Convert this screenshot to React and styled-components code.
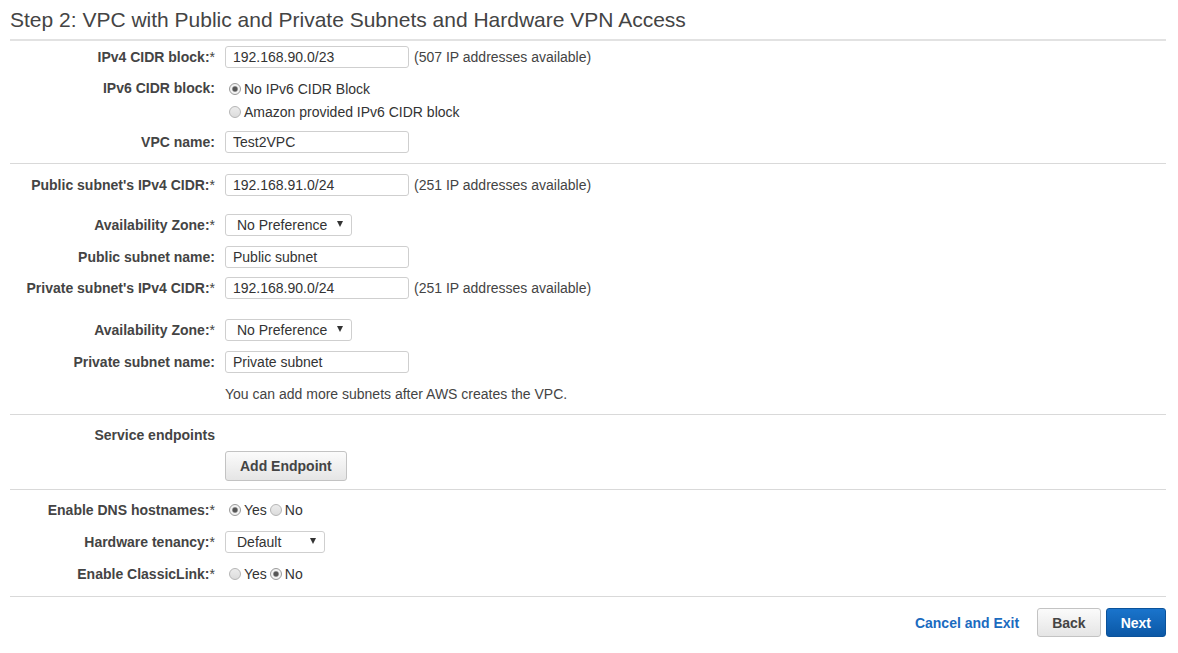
import styled, { createGlobalStyle } from "styled-components";

const GlobalStyle = createGlobalStyle`
  body {
    margin: 0;
    background: #fff;
    font-family: "Liberation Sans", Arial, sans-serif;
  }
`;

const Page = styled.div`
  padding: 0 12px 0 10px;
  font-family: "Liberation Sans", Arial, sans-serif;
  font-size: 14px;
  color: #444;
`;

const Title = styled.h2`
  margin: 0;
  height: 39px;
  line-height: 39px;
  font-size: 21px;
  font-weight: normal;
  color: #444;
  border-bottom: 2px solid #e2e2e2;
`;

const Section = styled.section`
  padding: ${(p) => p.$pt}px 0 ${(p) => p.$pb}px;
  border-bottom: 1px solid #d9d9d9;
`;

const Row = styled.div`
  display: flex;
  align-items: flex-start;
  margin-top: ${(p) => p.$mt || 0}px;
`;

const Label = styled.div`
  width: 205px;
  margin-right: 10px;
  flex-shrink: 0;
  text-align: right;
  line-height: 22px;
  font-weight: bold;
  color: #444;
  white-space: nowrap;
`;

const Req = styled.span`
  font-weight: normal;
`;

const Field = styled.div`
  display: flex;
  flex-direction: ${(p) => (p.$column ? "column" : "row")};
  align-items: ${(p) => (p.$column ? "flex-start" : "center")};
  min-height: 22px;
`;

const TextInput = styled.input`
  box-sizing: border-box;
  width: 184px;
  height: 22px;
  margin: 0;
  padding: 0 7px;
  border: 1px solid #cfcfcf;
  border-radius: 3px;
  font-family: "Liberation Sans", Arial, sans-serif;
  font-size: 14px;
  color: #333;
  background: #fff;
  outline: none;
`;

const Hint = styled.span`
  margin-left: 5px;
  line-height: 22px;
  color: #444;
`;

const Note = styled.div`
  line-height: 22px;
  color: #444;
`;

const Select = styled.div`
  box-sizing: border-box;
  width: ${(p) => p.$w}px;
  height: 22px;
  display: flex;
  align-items: center;
  justify-content: space-between;
  padding: 0 8px 0 11px;
  border: 1px solid #cfcfcf;
  border-radius: 3px;
  background: #fff;
  color: #333;
  cursor: default;
`;

const Caret = styled.span`
  width: 0;
  height: 0;
  margin-top: -2px;
  border-left: 3.5px solid transparent;
  border-right: 3.5px solid transparent;
  border-top: 6px solid #333;
`;

const RadioLine = styled.label`
  display: flex;
  align-items: center;
  height: 23px;
  color: #333;
`;

const RadioInline = styled.label`
  display: flex;
  align-items: center;
  height: 22px;
  color: #333;

  & + & {
    margin-left: -1px;
  }
`;

const RadioDot = styled.span`
  box-sizing: border-box;
  width: 12px;
  height: 12px;
  margin: 0 3px 0 4px;
  border-radius: 50%;
  border: 1px solid ${(p) => (p.$on ? "#9a9a9a" : "#b5b5b5")};
  background: ${(p) =>
    p.$on
      ? "radial-gradient(circle, #555 0 2px, #999 2.6px, #f2f2f2 3.4px)"
      : "linear-gradient(#ececec, #dcdcdc)"};
`;

const Button = styled.button`
  box-sizing: border-box;
  height: ${(p) => p.$h || 29}px;
  padding: 0 14px;
  margin: 0;
  border-radius: 3px;
  font-family: "Liberation Sans", Arial, sans-serif;
  font-size: 14px;
  font-weight: bold;
  cursor: pointer;
  border: 1px solid ${(p) => (p.$primary ? "#0b529a" : "#c3c3c3")};
  color: ${(p) => (p.$primary ? "#fff" : "#444")};
  background: ${(p) =>
    p.$primary
      ? "linear-gradient(#1a74cc, #0b58a6)"
      : "linear-gradient(#fbfbfb, #e5e5e5)"};
`;

const Footer = styled.div`
  display: flex;
  justify-content: flex-end;
  align-items: center;
  gap: 5px;
  padding-top: 11px;
`;

const LinkButton = styled.a`
  margin-right: 13px;
  color: #1b6bbf;
  font-weight: bold;
  text-decoration: none;
  cursor: pointer;
`;

function Radio({ on, inline, children }) {
  const Wrap = inline ? RadioInline : RadioLine;
  return (
    <Wrap>
      <RadioDot $on={on} />
      {children}
    </Wrap>
  );
}

function FormRow({ label, required, mt, children, column }) {
  return (
    <Row $mt={mt}>
      <Label>
        {label}
        {required && <Req>*</Req>}
      </Label>
      <Field $column={column}>{children}</Field>
    </Row>
  );
}

function Dropdown({ value, width }) {
  return (
    <Select $w={width}>
      <span>{value}</span>
      <Caret />
    </Select>
  );
}

export default function App() {
  return (
    <>
      <GlobalStyle />
      <Page>
        <Title>Step 2: VPC with Public and Private Subnets and Hardware VPN Access</Title>

        <Section $pt={5} $pb={10}>
          <FormRow label="IPv4 CIDR block:" required>
            <TextInput readOnly value="192.168.90.0/23" />
            <Hint>(507 IP addresses available)</Hint>
          </FormRow>
          <FormRow label="IPv6 CIDR block:" mt={9} column>
            <Radio on>No IPv6 CIDR Block</Radio>
            <Radio>Amazon provided IPv6 CIDR block</Radio>
          </FormRow>
          <FormRow label="VPC name:" mt={8}>
            <TextInput readOnly value="Test2VPC" />
          </FormRow>
        </Section>

        <Section $pt={10} $pb={9}>
          <FormRow label="Public subnet's IPv4 CIDR:" required>
            <TextInput readOnly value="192.168.91.0/24" />
            <Hint>(251 IP addresses available)</Hint>
          </FormRow>
          <FormRow label="Availability Zone:" required mt={18}>
            <Dropdown value="No Preference" width={127} />
          </FormRow>
          <FormRow label="Public subnet name:" mt={10}>
            <TextInput readOnly value="Public subnet" />
          </FormRow>
          <FormRow label="Private subnet's IPv4 CIDR:" required mt={9}>
            <TextInput readOnly value="192.168.90.0/24" />
            <Hint>(251 IP addresses available)</Hint>
          </FormRow>
          <FormRow label="Availability Zone:" required mt={20}>
            <Dropdown value="No Preference" width={127} />
          </FormRow>
          <FormRow label="Private subnet name:" mt={10}>
            <TextInput readOnly value="Private subnet" />
          </FormRow>
          <FormRow label="" mt={10}>
            <Note>You can add more subnets after AWS creates the VPC.</Note>
          </FormRow>
        </Section>

        <Section $pt={9} $pb={8}>
          <Row>
            <Label>Service endpoints</Label>
          </Row>
          <FormRow label="" mt={5}>
            <Button $h={30}>Add Endpoint</Button>
          </FormRow>
        </Section>

        <Section $pt={9} $pb={11}>
          <FormRow label="Enable DNS hostnames:" required>
            <Radio on inline>Yes</Radio>
            <Radio inline>No</Radio>
          </FormRow>
          <FormRow label="Hardware tenancy:" required mt={10}>
            <Dropdown value="Default" width={100} />
          </FormRow>
          <FormRow label="Enable ClassicLink:" required mt={10}>
            <Radio inline>Yes</Radio>
            <Radio on inline>No</Radio>
          </FormRow>
        </Section>

        <Footer>
          <LinkButton>Cancel and Exit</LinkButton>
          <Button>Back</Button>
          <Button $primary>Next</Button>
        </Footer>
      </Page>
    </>
  );
}
